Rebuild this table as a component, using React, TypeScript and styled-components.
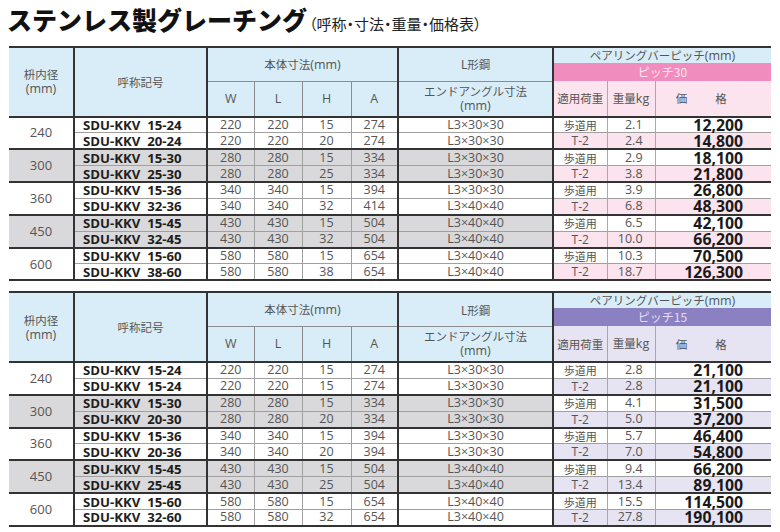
import React from "react";
import styled, { createGlobalStyle } from "styled-components";

const GlobalStyle = createGlobalStyle`
  html, body { margin: 0; padding: 0; background: #ffffff; }
  body {
    font-family: "Open Sans", "Noto Sans CJK JP", sans-serif;
    color: #444;
  }
`;

const DARK = "2px solid #333333";
const LIGHT = "1px solid #a0a0a0";
const MID = "1px solid #8c8c8c";

type Palette = { band: string; bandText: string; soft: string; line: string };

const PINK: Palette = { band: "#f18dbe", bandText: "#fde3ef", soft: "#fbe4ee", line: "#b9a0ab" };
const PURPLE: Palette = { band: "#8b80c1", bandText: "#e2ddf4", soft: "#e6e3f2", line: "#a7a3b8" };

type Row = {
  name: string;
  w: number;
  l: number;
  h: number;
  a: number;
  angle: string;
  load: string;
  kg: string;
  price: string;
};
type Group = { size: number; rows: Row[] };

const r = (name: string, w: number, l: number, h: number, a: number, angle: string, load: string, kg: string, price: string): Row => ({
  name, w, l, h, a, angle, load, kg, price,
});

const A30 = "L3×30×30";
const A40 = "L3×40×40";
const WALK = "歩道用";
const T2 = "T-2";

const TABLE30: Group[] = [
  { size: 240, rows: [r("15-24", 220, 220, 15, 274, A30, WALK, "2.1", "12,200"), r("20-24", 220, 220, 20, 274, A30, T2, "2.4", "14,800")] },
  { size: 300, rows: [r("15-30", 280, 280, 15, 334, A30, WALK, "2.9", "18,100"), r("25-30", 280, 280, 25, 334, A30, T2, "3.8", "21,800")] },
  { size: 360, rows: [r("15-36", 340, 340, 15, 394, A30, WALK, "3.9", "26,800"), r("32-36", 340, 340, 32, 414, A40, T2, "6.8", "48,300")] },
  { size: 450, rows: [r("15-45", 430, 430, 15, 504, A40, WALK, "6.5", "42,100"), r("32-45", 430, 430, 32, 504, A40, T2, "10.0", "66,200")] },
  { size: 600, rows: [r("15-60", 580, 580, 15, 654, A40, WALK, "10.3", "70,500"), r("38-60", 580, 580, 38, 654, A40, T2, "18.7", "126,300")] },
];

const TABLE15: Group[] = [
  { size: 240, rows: [r("15-24", 220, 220, 15, 274, A30, WALK, "2.8", "21,100"), r("15-24", 220, 220, 15, 274, A30, T2, "2.8", "21,100")] },
  { size: 300, rows: [r("15-30", 280, 280, 15, 334, A30, WALK, "4.1", "31,500"), r("20-30", 280, 280, 20, 334, A30, T2, "5.0", "37,200")] },
  { size: 360, rows: [r("15-36", 340, 340, 15, 394, A30, WALK, "5.7", "46,400"), r("20-36", 340, 340, 20, 394, A30, T2, "7.0", "54,800")] },
  { size: 450, rows: [r("15-45", 430, 430, 15, 504, A40, WALK, "9.4", "66,200"), r("25-45", 430, 430, 25, 504, A40, T2, "13.4", "89,100")] },
  { size: 600, rows: [r("15-60", 580, 580, 15, 654, A40, WALK, "15.5", "114,500"), r("32-60", 580, 580, 32, 654, A40, T2, "27.8", "190,100")] },
];

/* ---------- layout ---------- */

const Page = styled.div`
  width: 780px;
  height: 532px;
  overflow: hidden;
  display: flex;
  flex-direction: column;
`;

const TitleBar = styled.header`
  flex-shrink: 0;
  height: 46px;
  box-sizing: border-box;
  padding: 5px 0 0 7px;
  display: flex;
  align-items: baseline;
`;

const MainTitle = styled.h1`
  margin: 0;
  font-family: "Noto Sans CJK JP", sans-serif;
  font-weight: 900;
  font-size: 25px;
  line-height: 28px;
  color: #111;
  letter-spacing: 0;
`;

const SubTitle = styled.span`
  margin-left: 2px;
  font-family: "Noto Sans CJK JP", sans-serif;
  font-size: 15px;
  font-weight: 400;
  color: #222;
  font-feature-settings: "palt";
`;

const Tables = styled.div`
  flex-shrink: 0;
  display: flex;
  flex-direction: column;
  gap: 10px;
`;

const Table = styled.table`
  border-collapse: collapse;
  table-layout: fixed;
  width: 762px;
  margin-left: 9px;
  border-top: ${DARK};
  border-bottom: ${DARK};
`;

/* ---------- header cells ---------- */

type Edge = "dark" | "light" | "mid" | "none" | "pitch";

const edge = (e: Edge | undefined, p: Palette) =>
  e === "dark" ? DARK : e === "light" ? LIGHT : e === "mid" ? MID : e === "pitch" ? `1px solid ${p.line}` : "none";

const HeadCell = styled.th<{ $left?: Edge; $bottom?: Edge; $bg?: string; $h: number; $pal: Palette }>`
  height: ${(p) => p.$h}px;
  padding: 0;
  background: ${(p) => p.$bg ?? "#d9edf8"};
  border-left: ${(p) => edge(p.$left, p.$pal)};
  border-bottom: ${(p) => edge(p.$bottom, p.$pal)};
  font-family: "Noto Sans CJK JP", sans-serif;
  font-weight: 400;
  font-size: 11.5px;
  line-height: 14px;
  color: #555;
  text-align: center;
  vertical-align: middle;
`;

const LatinHead = styled.span`
  font-family: "Open Sans", sans-serif;
  font-size: 12.5px;
  color: #555;
`;

const BandCell = styled(HeadCell)`
  background: ${(p) => p.$pal.band};
  color: ${(p) => p.$pal.bandText};
  font-size: 12px;
`;

const PriceHead = styled(HeadCell)`
  padding-right: 24px;
`;

const SpacedLabel = styled.span`
  letter-spacing: 28px;
  margin-right: -28px;
`;

/* ---------- body cells ---------- */

const BaseCell = styled.td<{ $shade?: boolean; $top: Edge; $pal: Palette }>`
  height: 14.8px;
  padding: 0;
  border-top: ${(p) => edge(p.$top, p.$pal)};
  background: ${(p) => (p.$shade ? "#d9d9db" : "#ffffff")};
  text-align: center;
  vertical-align: middle;
  white-space: nowrap;
`;

const SizeCell = styled(BaseCell)`
  font-size: 13px;
  line-height: 15px;
  color: #555;
`;

const NameCell = styled(BaseCell)`
  border-left: ${DARK};
  text-align: left;
  padding-left: 8px;
  font-weight: 700;
  font-size: 13.2px;
  line-height: 14px;
  color: #1e1e1e;
  white-space: pre;
`;

const DimCell = styled(BaseCell)<{ $first?: boolean }>`
  border-left: ${(p) => (p.$first ? DARK : LIGHT)};
  font-size: 12.5px;
  line-height: 14px;
  color: #555;
`;

const AngleCell = styled(BaseCell)`
  border-left: ${DARK};
  font-size: 12.5px;
  line-height: 14px;
  color: #555;
`;

const LoadCell = styled(BaseCell)<{ $soft: boolean }>`
  border-left: ${DARK};
  background: ${(p) => (p.$soft ? p.$pal.soft : "#ffffff")};
  font-family: "Noto Sans CJK JP", sans-serif;
  font-size: 11px;
  line-height: 14px;
  color: #555;
`;

const LoadLatin = styled.span`
  font-family: "Open Sans", sans-serif;
  font-size: 12px;
`;

const WeightCell = styled(BaseCell)<{ $soft: boolean }>`
  border-left: 1px solid ${(p) => p.$pal.line};
  background: ${(p) => (p.$soft ? p.$pal.soft : "#ffffff")};
  text-align: right;
  padding-right: 12px;
  font-size: 12.5px;
  line-height: 14px;
  color: #555;
`;

const PriceCell = styled(BaseCell)<{ $soft: boolean }>`
  border-left: 1px solid ${(p) => p.$pal.line};
  background: ${(p) => (p.$soft ? p.$pal.soft : "#ffffff")};
  text-align: right;
  padding-right: 28px;
  font-weight: 700;
  font-size: 15.8px;
  line-height: 14px;
  color: #1a1a1a;
`;

const COLS = [65, 133, 47, 48, 49, 47, 155, 54, 48, 116];

const PriceTable: React.FC<{ pitch: string; pal: Palette; groups: Group[] }> = ({ pitch, pal, groups }) => (
  <Table>
    <colgroup>
      {COLS.map((w, i) => (
        <col key={i} style={{ width: w }} />
      ))}
    </colgroup>
    <thead>
      <tr>
        <HeadCell rowSpan={3} $h={15} $pal={pal} $bottom="dark">
          枡内径
          <br />
          <LatinHead>(mm)</LatinHead>
        </HeadCell>
        <HeadCell rowSpan={3} $h={15} $pal={pal} $left="dark" $bottom="dark">
          呼称記号
        </HeadCell>
        <HeadCell colSpan={4} rowSpan={2} $h={15} $pal={pal} $left="dark" $bottom="mid">
          本体寸法<LatinHead>(mm)</LatinHead>
        </HeadCell>
        <HeadCell rowSpan={2} $h={15} $pal={pal} $left="dark" $bottom="mid">
          L形鋼
        </HeadCell>
        <HeadCell colSpan={3} $h={15} $pal={pal} $left="dark">
          ペアリングバーピッチ<LatinHead>(mm)</LatinHead>
        </HeadCell>
      </tr>
      <tr>
        <BandCell colSpan={3} $h={18} $pal={pal} $left="dark">
          {pitch}
        </BandCell>
      </tr>
      <tr>
        <HeadCell $h={34} $pal={pal} $left="dark" $bottom="dark">
          <LatinHead>W</LatinHead>
        </HeadCell>
        <HeadCell $h={34} $pal={pal} $left="mid" $bottom="dark">
          <LatinHead>L</LatinHead>
        </HeadCell>
        <HeadCell $h={34} $pal={pal} $left="mid" $bottom="dark">
          <LatinHead>H</LatinHead>
        </HeadCell>
        <HeadCell $h={34} $pal={pal} $left="mid" $bottom="dark">
          <LatinHead>A</LatinHead>
        </HeadCell>
        <HeadCell $h={34} $pal={pal} $left="dark" $bottom="dark">
          エンドアングル寸法
          <br />
          <LatinHead>(mm)</LatinHead>
        </HeadCell>
        <HeadCell $h={34} $pal={pal} $left="dark" $bottom="dark" $bg={pal.soft}>
          適用荷重
        </HeadCell>
        <HeadCell $h={34} $pal={pal} $left="pitch" $bottom="dark" $bg={pal.soft}>
          重量<LatinHead>kg</LatinHead>
        </HeadCell>
        <PriceHead $h={34} $pal={pal} $left="pitch" $bottom="dark" $bg={pal.soft}>
          <SpacedLabel>価格</SpacedLabel>
        </PriceHead>
      </tr>
    </thead>
    <tbody>
      {groups.map((g, gi) =>
        g.rows.map((row, ri) => {
          const shade = gi % 2 === 1;
          const top: Edge = ri === 0 ? "dark" : "light";
          const soft = ri === 1;
          return (
            <tr key={`${gi}-${ri}`}>
              {ri === 0 && (
                <SizeCell rowSpan={2} $shade={shade} $top="dark" $pal={pal}>
                  {g.size}
                </SizeCell>
              )}
              <NameCell $shade={shade} $top={top} $pal={pal}>
                {`SDU-KKV  ${row.name}`}
              </NameCell>
              <DimCell $first $shade={shade} $top={top} $pal={pal}>
                {row.w}
              </DimCell>
              <DimCell $shade={shade} $top={top} $pal={pal}>
                {row.l}
              </DimCell>
              <DimCell $shade={shade} $top={top} $pal={pal}>
                {row.h}
              </DimCell>
              <DimCell $shade={shade} $top={top} $pal={pal}>
                {row.a}
              </DimCell>
              <AngleCell $shade={shade} $top={top} $pal={pal}>
                {row.angle}
              </AngleCell>
              <LoadCell $soft={soft} $top={top} $pal={pal}>
                {row.load === T2 ? <LoadLatin>{row.load}</LoadLatin> : row.load}
              </LoadCell>
              <WeightCell $soft={soft} $top={top} $pal={pal}>
                {row.kg}
              </WeightCell>
              <PriceCell $soft={soft} $top={top} $pal={pal}>
                {row.price}
              </PriceCell>
            </tr>
          );
        })
      )}
    </tbody>
  </Table>
);

export default function App() {
  return (
    <Page>
      <GlobalStyle />
      <TitleBar>
        <MainTitle>ステンレス製グレーチング</MainTitle>
        <SubTitle>（呼称・寸法・重量・価格表）</SubTitle>
      </TitleBar>
      <Tables>
        <PriceTable pitch="ピッチ30" pal={PINK} groups={TABLE30} />
        <PriceTable pitch="ピッチ15" pal={PURPLE} groups={TABLE15} />
      </Tables>
    </Page>
  );
}
